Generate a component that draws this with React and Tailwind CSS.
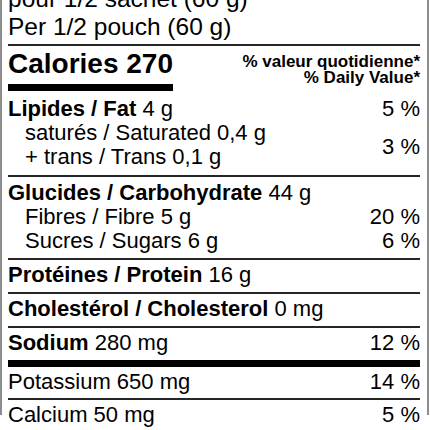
export default function App() {
  const Line = () => <div className="h-[2px] bg-[#262626]" />;
  return (
    <div className="w-[430px] h-[430px] overflow-hidden bg-white">
      <div className="w-[429px] h-[430px] border-l-2 border-r-2 border-[#8c8c8c] pl-[6px] pr-[7px] text-black [font-family:'Liberation_Sans',Arial,sans-serif]">
        <div className="-mt-[15px] text-[24.5px] leading-[28px]">
          <div>pour 1/2 sachet (60 g)</div>
          <div>Per 1/2 pouch (60 g)</div>
        </div>
        <div className="mt-[3px]">
          <Line />
        </div>
        <div className="flex justify-between items-start">
          <div className="pt-[3px]">
            <div className="text-[28px] leading-[30px] font-bold">Calories 270</div>
            <div className="mt-[5px] h-[7px] bg-black" />
          </div>
          <div className="pt-[8px] text-right font-bold text-[17px] leading-[16px]">
            <div>% valeur quotidienne*</div>
            <div>% Daily Value*</div>
          </div>
        </div>
        <div className="text-[22px] leading-[24px]">
          <div className="pt-[6px] pb-[6px]">
            <div className="flex justify-between">
              <span>
                <b>Lipides / Fat</b> 4 g
              </span>
              <span>5 %</span>
            </div>
            <div className="flex justify-between items-center">
              <div className="pl-[17px]">
                <div>saturés / Saturated 0,4 g</div>
                <div>+ trans / Trans 0,1 g</div>
              </div>
              <span className="mt-[4px]">3 %</span>
            </div>
          </div>
          <Line />
          <div className="pt-[4px] pb-[5px]">
            <div>
              <b>Glucides / Carbohydrate</b> 44 g
            </div>
            <div className="flex justify-between">
              <span className="pl-[17px]">Fibres / Fibre 5 g</span>
              <span>20 %</span>
            </div>
            <div className="flex justify-between">
              <span className="pl-[17px]">Sucres / Sugars 6 g</span>
              <span>6 %</span>
            </div>
          </div>
          <Line />
          <div className="pt-[3px] pb-[5px]">
            <b>Protéines / Protein</b> 16 g
          </div>
          <Line />
          <div className="pt-[3px] pb-[5px]">
            <b>Cholestérol / Cholesterol</b> 0 mg
          </div>
          <Line />
          <div className="pt-[3px] pb-[5px] flex justify-between">
            <span>
              <b>Sodium</b> 280 mg
            </span>
            <span>12 %</span>
          </div>
          <div className="h-[7px] bg-black" />
          <div className="pt-[3px] pb-[4px] flex justify-between">
            <span>Potassium 650 mg</span>
            <span>14 %</span>
          </div>
          <Line />
          <div className="pt-[3px] pb-[5px] flex justify-between">
            <span>Calcium 50 mg</span>
            <span>5 %</span>
          </div>
        </div>
      </div>
    </div>
  );
}
